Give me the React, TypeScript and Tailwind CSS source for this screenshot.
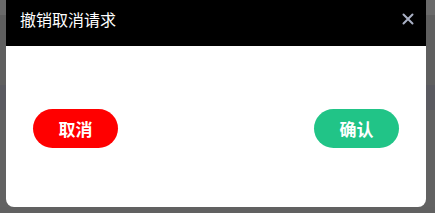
export default function App() {
  return (
    <div
      className="relative h-[213px] w-[435px] overflow-hidden bg-[#616161]"
      style={{ fontFamily: '"Noto Sans CJK SC", "Noto Sans", sans-serif' }}
    >
      {/* dimmed page behind the overlay */}
      <div className="flex flex-col">
        <div className="h-[15px] bg-[#6a6a6a]" />
        <div className="h-[70px] bg-[#5f5f5f]" />
        <div className="h-[25px] bg-[#5a5a60]" />
        <div className="h-[97px] bg-[#626262]" />
      </div>

      {/* modal */}
      <div className="absolute left-[6px] top-0 flex w-[420px] flex-col overflow-hidden rounded-b-[8px] bg-white">
        <div className="flex h-[46px] items-center justify-between bg-black pb-[9px] pl-[14px] pr-[12px]">
          <span className="text-[16px] leading-none text-white">撤销取消请求</span>
          <svg width="12" height="12" viewBox="0 0 12 12">
            <path
              d="M1.5 1.5 L10.5 10.5 M10.5 1.5 L1.5 10.5"
              stroke="#a9b0c4"
              strokeWidth="2"
              strokeLinecap="round"
            />
          </svg>
        </div>
        <div className="flex h-[161px] items-start justify-between px-[27px] pt-[63px]">
          <button className="flex h-[39px] w-[85px] items-center justify-center rounded-full bg-[#ff0000] text-[17px] font-bold text-white">
            取消
          </button>
          <button className="flex h-[39px] w-[85px] items-center justify-center rounded-full bg-[#21c487] text-[17px] font-bold text-white">
            确认
          </button>
        </div>
      </div>
    </div>
  );
}
